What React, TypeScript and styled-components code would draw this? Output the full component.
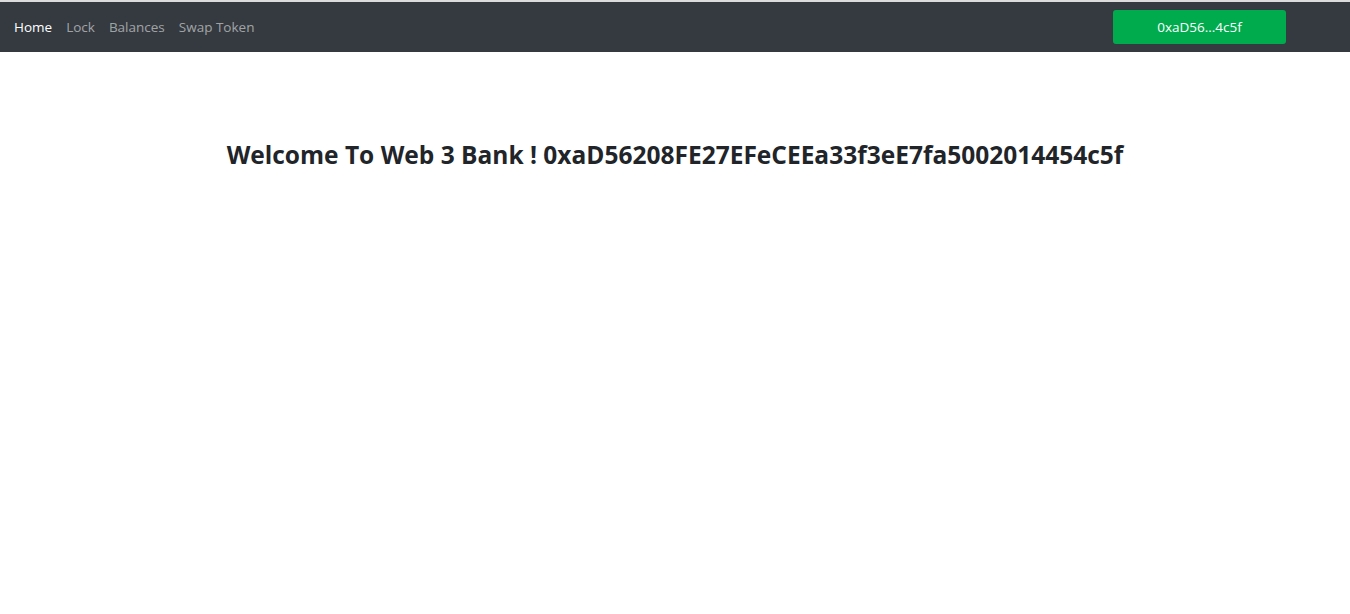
import React from "react";
import styled, { createGlobalStyle } from "styled-components";

const Global = createGlobalStyle`
  html, body { margin: 0; padding: 0; background: #fff; }
  body { font-family: "Open Sans", "Noto Sans", Arial, sans-serif; color: #212529; }
  * { box-sizing: border-box; }
`;

const TopStrip = styled.div`
  height: 2px;
  background: #dcdcdc;
`;

const Navbar = styled.nav`
  height: 50px;
  background: #343a40;
  display: flex;
  align-items: center;
  justify-content: space-between;
  padding: 0 64px 0 14px;
`;

const NavLinks = styled.div`
  display: flex;
  gap: 14px;
`;

const NavLink = styled.a<{ $active?: boolean }>`
  font-size: 13.5px;
  color: ${(p) => (p.$active ? "#ffffff" : "rgba(255,255,255,0.55)")};
  text-decoration: none;
  cursor: pointer;
`;

const WalletButton = styled.button`
  width: 173px;
  height: 34px;
  background: #00ab4e;
  border: none;
  border-radius: 3px;
  color: #fff;
  font-family: inherit;
  font-size: 13.5px;
`;

const Main = styled.main`
  display: flex;
  justify-content: center;
  padding-top: 86px;
`;

const Heading = styled.h2`
  margin: 0;
  font-size: 24.5px;
  font-weight: 700;
  color: #212529;
`;

export default function App() {
  return (
    <>
      <Global />
      <TopStrip />
      <Navbar>
        <NavLinks>
          <NavLink $active>Home</NavLink>
          <NavLink>Lock</NavLink>
          <NavLink>Balances</NavLink>
          <NavLink>Swap Token</NavLink>
        </NavLinks>
        <WalletButton>0xaD56...4c5f</WalletButton>
      </Navbar>
      <Main>
        <Heading>Welcome To Web 3 Bank ! 0xaD56208FE27EFeCEEa33f3eE7fa5002014454c5f</Heading>
      </Main>
    </>
  );
}
